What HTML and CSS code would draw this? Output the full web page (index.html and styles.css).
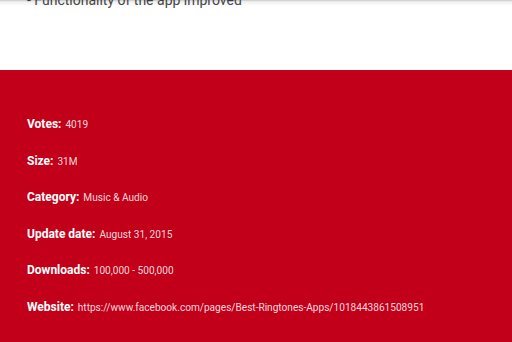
FILE: index.html
```html
<!DOCTYPE html>
<html>
<head>
    <meta name="viewport" content="width=device-width, initial-scale=1.0">
    <link rel="stylesheet" href="styles.css">
</head>
<body>
    <div class="shadow"></div>
    <div class="changes">
        <p>- Functionality of the app improved</p>
    </div>
    <div class="details">
        <div class="row"><b>Votes:</b> <span>4019</span></div>
        <div class="row"><b>Size:</b> <span>31M</span></div>
        <div class="row"><b>Category:</b> <span>Music &amp; Audio</span></div>
        <div class="row"><b>Update date:</b> <span>August 31, 2015</span></div>
        <div class="row"><b>Downloads:</b> <span>100,000 - 500,000</span></div>
        <div class="row"><b>Website:</b> <span>https://www.facebook.com/pages/Best-Ringtones-Apps/1018443861508951</span></div>
    </div>
</body>
</html>
```

FILE: styles.css
```css
body {
    margin: 0;
    font-family: Roboto, "Liberation Sans", sans-serif;
    background: #fff;
    overflow: hidden;
    height: 342px;
}
.shadow {
    position: fixed;
    top: 0;
    left: 0;
    width: 100%;
    height: 6px;
    background: linear-gradient(to bottom, rgba(0, 0, 0, 0.22), rgba(0, 0, 0, 0.06) 30%, rgba(0, 0, 0, 0));
}
.changes {
    display: flow-root;
    height: 70px;
    padding-left: 27px;
}
.changes p {
    margin: -10px 0 0;
    font-size: 14px;
    line-height: 20px;
    color: #4a4a4a;
}
.details {
    background: #c2001a;
    color: #fff;
    padding: 43px 27px 40px;
    display: flex;
    flex-direction: column;
    gap: 16.6px;
}
.row {
    height: 20px;
    line-height: 20px;
    white-space: nowrap;
}
.row b {
    font-size: 12px;
    font-weight: bold;
}
.row span {
    font-size: 10.1px;
    color: rgba(255, 255, 255, 0.85);
}
```
